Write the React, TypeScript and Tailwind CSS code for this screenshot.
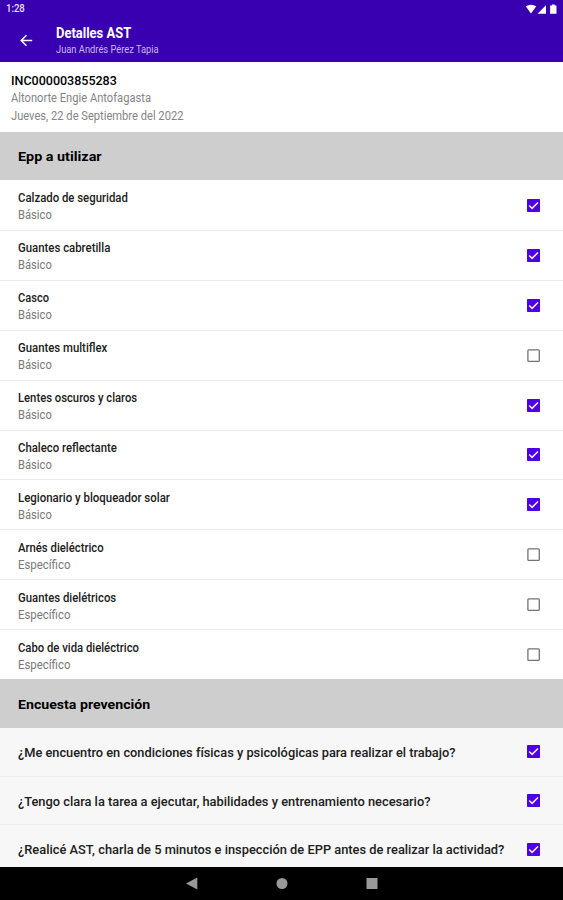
import { useLayoutEffect, useRef, useState } from "react";

type FitProps = { text: string; width: number; className: string };

/* Condensed line of text: squeezed horizontally to the given width. */
function Fit({ text, width, className }: FitProps) {
  const ref = useRef<HTMLSpanElement>(null);
  const [scale, setScale] = useState(1);
  useLayoutEffect(() => {
    if (ref.current) setScale(width / ref.current.offsetWidth);
  }, [text, width]);
  return (
    <div className="flex">
      <span
        ref={ref}
        className={`shrink-0 origin-left whitespace-nowrap ${className}`}
        style={{ transform: `scaleX(${scale})` }}
      >
        {text}
      </span>
    </div>
  );
}

function Check({ on }: { on: boolean }) {
  return (
    <svg className="mr-[23px] size-[13px] shrink-0" viewBox="0 0 13 13" fill="none">
      {on ? (
        <>
          <rect width="13" height="13" rx="0.8" fill="#4c00e6" />
          <path d="M2.2 6.5 5.1 9.3 11 3.5" stroke="#f1e8ff" strokeWidth="1.6" />
        </>
      ) : (
        <rect x="0.9" y="0.9" width="11.4" height="11.4" rx="0.9" stroke="#737373" strokeWidth="1.3" />
      )}
    </svg>
  );
}

const items: [string, number, string, boolean][] = [
  ["Calzado de seguridad", 110, "Básico", true],
  ["Guantes cabretilla", 92, "Básico", true],
  ["Casco", 31, "Básico", true],
  ["Guantes multiflex", 89, "Básico", false],
  ["Lentes oscuros y claros", 119, "Básico", true],
  ["Chaleco reflectante", 99, "Básico", true],
  ["Legionario y bloqueador solar", 152, "Básico", true],
  ["Arnés dieléctrico", 86, "Específico", false],
  ["Guantes dielétricos", 98, "Específico", false],
  ["Cabo de vida dieléctrico", 121, "Específico", false],
];

const questions: [string, number][] = [
  ["¿Me encuentro en condiciones físicas y psicológicas para realizar el trabajo?", 437],
  ["¿Tengo clara la tarea a ejecutar, habilidades y entrenamiento necesario?", 412],
  ["¿Realicé AST, charla de 5 minutos e inspección de EPP antes de realizar la actividad?", 486],
];

export default function App() {
  return (
    <div className="flex h-[900px] w-[563px] flex-col overflow-hidden bg-white font-['Roboto',sans-serif] text-black">
      <header className="h-[62px] shrink-0 bg-[#3900b1] text-white">
        <div className="flex h-[18px] items-center justify-between pr-[5px] pl-[6px]">
          <Fit text="1:28" width={19} className="text-[10px] leading-[18px] font-medium text-[#e9e0fa]" />
          <svg className="h-[12px] w-[33px]" viewBox="0 0 33 12" fill="#fff">
            <path d="M.7 3.2Q6 .2 11.3 3.2L6 10.4Z" />
            <path d="M12.5 10.8 21 2.2v8.6Z" />
            <path d="M26.9 1.4h2.8v1.2h1.8v8.2h-6.4V2.6h1.8Z" />
          </svg>
        </div>
        <div className="flex h-[44px] pl-[20px]">
          <svg className="mt-[16px] size-[13px] shrink-0" viewBox="0 0 13 13" fill="none" stroke="#fff" strokeWidth="1.5">
            <path d="M12.2 6.5H1.5M6.5 1.2 1.2 6.5l5.3 5.3" />
          </svg>
          <div className="ml-[23px] pt-[7px]">
            <Fit text="Detalles AST" width={75} className="text-[14px] leading-[17px] font-bold" />
            <Fit text="Juan Andrés Pérez Tapia" width={103} className="text-[10.5px] leading-[15px] text-[#c9b6ee]" />
          </div>
        </div>
      </header>

      <section className="h-[70px] shrink-0 pt-[10px] pl-[11px]">
        <Fit text="INC000003855283" width={106} className="text-[12.5px] leading-[17px] font-medium" />
        <Fit text="Altonorte Engie Antofagasta" width={140} className="text-[12.5px] leading-[18px] text-[#858585]" />
        <Fit text="Jueves, 22 de Septiembre del 2022" width={172} className="text-[12.5px] leading-[18px] text-[#858585]" />
      </section>

      <h2 className="flex h-[48px] shrink-0 items-center bg-[#cecece] pl-[18px]">
        <Fit text="Epp a utilizar" width={84} className="text-[13.5px] leading-[18px] font-bold" />
      </h2>

      <ul className="grid h-[499px] shrink-0 grid-rows-10">
        {items.map(([name, width, kind, on]) => (
          <li key={name} className="flex items-center justify-between border-t border-[#ececec] pl-[18px] first:border-white">
            <div className="pt-[3px]">
              <Fit text={name} width={width} className="text-[12.5px] leading-[17px] font-medium text-[#202020]" />
              <Fit
                text={kind}
                width={kind === "Básico" ? 34 : 52}
                className="text-[12.5px] leading-[18px] text-[#787878]"
              />
            </div>
            <Check on={on} />
          </li>
        ))}
      </ul>

      <h2 className="flex h-[49px] shrink-0 items-center bg-[#cecece] pl-[18px]">
        <Fit text="Encuesta prevención" width={132} className="text-[13.5px] leading-[18px] font-bold" />
      </h2>

      <ul className="h-[139px] shrink-0 overflow-hidden bg-[#f7f7f7]">
        {questions.map(([question, width]) => (
          <li key={question} className="flex h-[48.7px] items-center justify-between border-b border-[#ededed] pl-[18px]">
            <div className="pt-[2px]">
              <Fit text={question} width={width} className="text-[13px] leading-[18px] font-medium text-[#202020]" />
            </div>
            <Check on />
          </li>
        ))}
      </ul>

      <nav className="flex h-[33px] shrink-0 justify-center bg-black">
        <svg className="h-[33px] w-[200px]" viewBox="0 0 200 33" fill="#999">
          <path d="M4 16.5 15.3 10.5v12Z" />
          <circle cx="100" cy="16.5" r="5.5" />
          <rect x="184.5" y="11" width="11" height="11" />
        </svg>
      </nav>
    </div>
  );
}
